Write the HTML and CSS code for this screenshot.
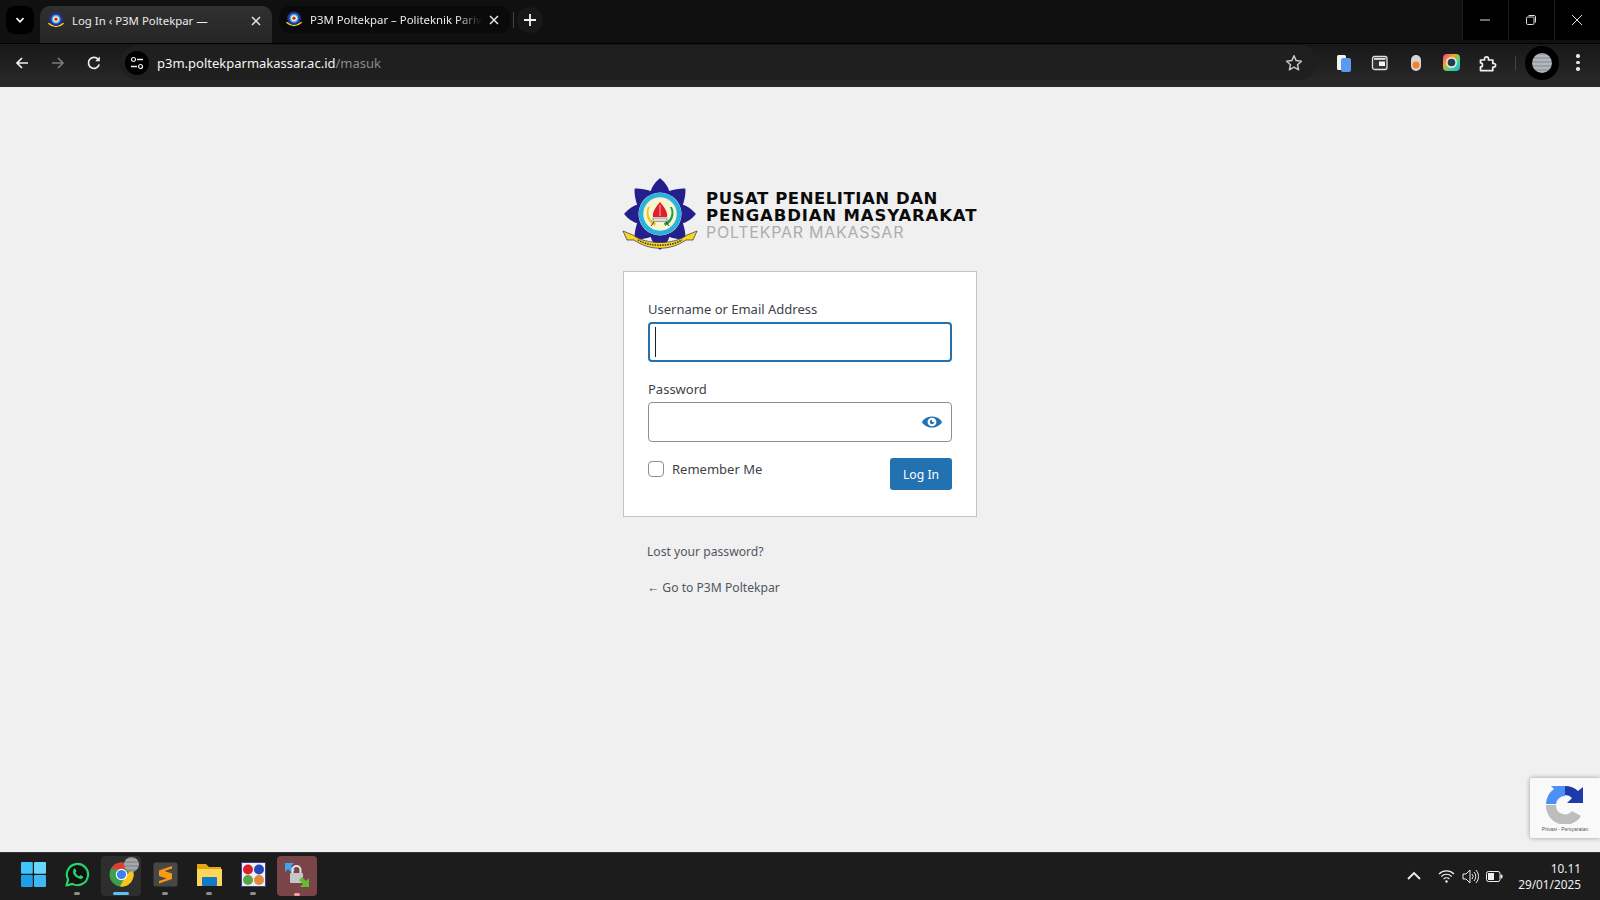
FILE: index.html
```html
<!DOCTYPE html>
<html lang="en">
<head>
<meta charset="utf-8">
<title>Log In ‹ P3M Poltekpar</title>
<link rel="stylesheet" href="styles.css">
</head>
<body>
<svg class="defs" width="0" height="0" aria-hidden="true">
  <defs>
    <symbol id="fav" viewBox="0 0 20 20">
      <path d="M1 13q9 8 18 0l-1-1q-8 6-16 0z" fill="#f5d020"/>
      <circle cx="10" cy="8" r="7.5" fill="#2a2f9e"/>
      <circle cx="10" cy="8" r="5" fill="#35b5e5"/>
      <circle cx="10" cy="8" r="3.4" fill="#f7f2c5"/>
      <circle cx="10" cy="8" r="1.8" fill="#e01f2d"/>
    </symbol>
  </defs>
</svg>
<div class="screen">
  <header class="tabstrip">
    <div class="tab-search"><svg width="12" height="12" viewBox="0 0 12 12"><path d="M2.5 4.2 6 7.8l3.5-3.6" fill="none" stroke="#fff" stroke-width="1.7"/></svg></div>
    <div class="tab tab-active">
      <svg class="fav" width="18" height="18"><use href="#fav"/></svg>
      <span class="tab-title">Log In ‹ P3M Poltekpar —</span>
      <svg class="tab-x" width="12" height="12" viewBox="0 0 12 12"><path d="M2 2l8 8M10 2l-8 8" stroke="#e8e8e8" stroke-width="1.5"/></svg>
    </div>
    <div class="tab tab-idle">
      <svg class="fav" width="18" height="18"><use href="#fav"/></svg>
      <span class="tab-title tab-fade">P3M Poltekpar – Politeknik Pariwisata</span>
      <svg class="tab-x" width="12" height="12" viewBox="0 0 12 12"><path d="M2 2l8 8M10 2l-8 8" stroke="#e8e8e8" stroke-width="1.5"/></svg>
    </div>
    <div class="tab-sep"></div>
    <div class="tab-new"><svg width="14" height="14" viewBox="0 0 14 14"><path d="M7 1v12M1 7h12" stroke="#f2f2f2" stroke-width="1.8"/></svg></div>
    <div class="win-controls">
      <div class="win-btn"><svg width="12" height="12" viewBox="0 0 12 12"><path d="M1 6h10" stroke="#ddd"/></svg></div>
      <div class="win-btn"><svg width="12" height="12" viewBox="0 0 12 12"><rect x="1.5" y="3" width="7.5" height="7.5" rx="1.2" fill="none" stroke="#ddd"/><path d="M3.5 1.5h5.5a1.5 1.5 0 0 1 1.5 1.5v5.5" fill="none" stroke="#ddd"/></svg></div>
      <div class="win-btn"><svg width="12" height="12" viewBox="0 0 12 12"><path d="M1 1l10 10M11 1 1 11" stroke="#ddd"/></svg></div>
    </div>
  </header>

  <nav class="toolbar">
    <div class="nav-btn"><svg width="16" height="16" viewBox="0 0 16 16"><path d="M14 8H3M8 3 3 8l5 5" fill="none" stroke="#f0f0f0" stroke-width="1.7"/></svg></div>
    <div class="nav-btn"><svg width="16" height="16" viewBox="0 0 16 16"><path d="M2 8h11M8 3l5 5-5 5" fill="none" stroke="#7b7b7b" stroke-width="1.7"/></svg></div>
    <div class="nav-btn"><svg width="16" height="16" viewBox="0 0 16 16"><path d="M13.2 9.6A5.5 5.5 0 1 1 12 4.2" fill="none" stroke="#f0f0f0" stroke-width="1.7"/><path d="M13.8 1.6v4.6H9.2z" fill="#f0f0f0"/></svg></div>
    <div class="omnibox">
      <div class="site-info"><svg width="14" height="14" viewBox="0 0 14 14"><circle cx="3.5" cy="3.5" r="2" fill="none" stroke="#eee" stroke-width="1.2"/><path d="M7 3.5h6M1 10.500h6" stroke="#eee" stroke-width="1.3"/><circle cx="10.500" cy="10.500" r="2" fill="none" stroke="#eee" stroke-width="1.2"/></svg></div>
      <div class="url"><span class="url-host">p3m.poltekparmakassar.ac.id</span><span class="url-path">/masuk</span></div>
      <svg class="star" width="18" height="18" viewBox="0 0 18 18"><path d="M9 1.800l2.200 4.800 5.200.6-3.900 3.500 1.100 5.100L9 13.200l-4.600 2.600 1.100-5.100L1.600 7.200l5.200-.6z" fill="none" stroke="#c8c8c8" stroke-width="1.500" stroke-linejoin="round"/></svg>
    </div>
    <div class="ext-row">
      <div class="ext"><svg width="16" height="18" viewBox="0 0 16 18"><rect x="1" y="1" width="9" height="15" rx="1.500" fill="#f2f2f2"/><rect x="5" y="4" width="10" height="14" rx="2" fill="#5a9bf0"/></svg></div>
      <div class="ext"><svg width="18" height="16" viewBox="0 0 18 16"><rect x="1.500" y="1.500" width="14.500" height="13" rx="2" fill="#333" stroke="#e4e4e4" stroke-width="1.300"/><rect x="3" y="3" width="11.500" height="1.800" fill="#e4e4e4"/><rect x="8" y="6.500" width="6" height="4.500" fill="#f4f4f4"/></svg></div>
      <div class="ext"><svg width="12" height="18" viewBox="0 0 12 18"><rect x="1" y="1" width="10" height="16" rx="5" fill="#d5d5d5"/><circle cx="6" cy="11" r="3.500" fill="#f5822a"/></svg></div>
      <div class="ext"><svg width="18" height="18" viewBox="0 0 18 18"><defs><linearGradient id="rb" x1="0" y1="0" x2="1" y2="1"><stop offset="0" stop-color="#f0359f"/><stop offset=".35" stop-color="#f5a623"/><stop offset=".65" stop-color="#3ddc84"/><stop offset="1" stop-color="#2f9bf0"/></linearGradient></defs><rect width="17" height="17" rx="4" fill="url(#rb)"/><circle cx="8.500" cy="8.500" r="5.500" fill="#dfe6ee"/><circle cx="8.500" cy="8.500" r="3.800" fill="#2a3a4d"/></svg></div>
      <div class="ext"><svg width="18" height="18" viewBox="0 0 18 18"><path d="M1.500 6H5.500V4.800a2 2 0 0 1 4 0V6h4.300v3.500h1a1.800 1.800 0 0 1 0 3.600h-1v3.500H1.500v-3.700a2 2 0 0 0 0-4z" fill="none" stroke="#f0f0f0" stroke-width="1.700" stroke-linejoin="round"/></svg></div>
      <div class="ext-sep"></div>
      <div class="avatar"><div class="avatar-img"></div></div>
      <div class="ext dots"><span></span><span></span><span></span></div>
    </div>
  </nav>

  <main class="page">
    <div class="login">
      <div class="logo">
        <svg class="emblem" width="76" height="76" viewBox="-38 -36 76 76">
          <path d="M0-35Q7-29 8.800-22 18-25 24.700-24.700 25-18 22-8.800 29-7 35 0 29 7 22 8.800 25 18 24.700 24.700 18 25 8.800 22 7 29 0 35-7 29-8.800 22-18 25-24.700 24.700-25 18-22 8.800-29 7-35 0-29-7-22-8.800-25-18-24.700-24.700-18-25-8.800-22-7-29 0-35z" fill="#241f8c" stroke="#241f8c" stroke-width="1.500" stroke-linejoin="round"/>
          <circle r="23" fill="#241f8c"/>
          <circle r="21.500" fill="#f2f2c8"/>
          <circle r="19" fill="none" stroke="#2cb2df" stroke-width="4.500"/>
          <circle r="15.500" fill="#f8f6cf"/>
          <path d="M-12-7A14 14 0 0 0-5 12l1-3A11 11 0 0 1-10-7z" fill="#e9c81f"/>
          <path d="M12-7A14 14 0 0 1 5 12l-1-3A11 11 0 0 0 10-7z" fill="#1f9a4a"/>
          <path d="M0-12C-5-6-8-1-7 3H7C8-1 5-6 0-12z" fill="#e01f2d"/>
          <path d="M0-9V2" stroke="#f8f6cf" stroke-width=".7"/>
          <rect x="-7" y="4" width="14" height="3.500" fill="#ddd" stroke="#555" stroke-width=".5"/>
          <path d="M-6 8-9 12M6 8 9 12" stroke="#333" stroke-width="1"/>
          <path d="M-37 17-27 21C-14 31 14 31 27 21L37 17 33 26 26 26C10 37-10 37-26 26L-33 26z" fill="#f6d91f" stroke="#2b2560" stroke-width=".7"/>
          <path d="M-22 26C-10 33 10 33 22 26" fill="none" stroke="#333" stroke-width="1.500" stroke-dasharray="1.500 1"/>
        </svg>
        <div class="logo-text">
          <div class="logo-line logo-line-1">PUSAT PENELITIAN DAN</div>
          <div class="logo-line">PENGABDIAN MASYARAKAT</div>
          <div class="logo-sub">POLTEKPAR MAKASSAR</div>
        </div>
      </div>

      <form class="card">
        <label class="field-label">Username or Email Address</label>
        <div class="input input-focus"><span class="caret"></span></div>
        <label class="field-label field-label-2">Password</label>
        <div class="input input-pass">
          <svg class="eye" width="20" height="20" viewBox="0 0 20 20"><path fill="#2271b1" d="M10 4.400C3.439 4.400 0 9.232 0 10c0 .766 3.439 5.600 10 5.600 6.560 0 10-4.834 10-5.600 0-.768-3.440-5.600-10-5.600zm0 9.907c-2.455 0-4.445-1.928-4.445-4.307S7.545 5.692 10 5.692s4.444 1.930 4.444 4.308-1.989 4.307-4.444 4.307zM10 10c-.407-.447.663-2.154 0-2.154-1.228 0-2.223.965-2.223 2.154s.995 2.154 2.223 2.154c1.227 0 2.223-.965 2.223-2.154 0-.547-1.877.379-2.223 0z"/></svg>
        </div>
        <div class="form-foot">
          <div class="remember"><span class="checkbox"></span><span>Remember Me</span></div>
          <div class="submit">Log In</div>
        </div>
      </form>

      <p class="below below-first">Lost your password?</p>
      <p class="below below-second">← Go to P3M Poltekpar</p>
    </div>

    <div class="recaptcha">
      <svg width="40" height="40" viewBox="0 0 40 40">
        <path d="M1 20A19 19 0 0 1 9 5L6 2H20V12A9 9 0 0 0 11 20Z" fill="#4a90f5"/>
        <path d="M20 2A19 19 0 0 1 33 7L38 3V19H22L27 14A9 9 0 0 0 20 11Z" fill="#1c3aa9"/>
        <path d="M1 21H11A9 9 0 0 0 27 27L36 32A19 19 0 0 1 1 21Z" fill="#bdbdbd"/>
      </svg>
      <div class="recaptcha-text">Privasi - Persyaratan</div>
    </div>
  </main>

  <footer class="taskbar">
    <div class="task">
      <svg class="task-icon" width="25" height="25" viewBox="0 0 25 25"><rect x="0" y="0" width="11.800" height="11.800" rx="1" fill="#41c4fb"/><rect x="13" y="0" width="12" height="11.800" rx="1" fill="#69d6fd"/><rect x="0" y="13" width="11.800" height="12" rx="1" fill="#1a9fe8"/><rect x="13" y="13" width="12" height="12" rx="1" fill="#3eb8f5"/></svg>
    </div>
    <div class="task">
      <svg class="task-icon" width="25" height="25" viewBox="0 0 25 25"><path d="M1.500 23.500 3.100 17.600A10.600 10.600 0 1 1 7.400 21.900z" fill="#111" stroke="#25d366" stroke-width="2.200" stroke-linejoin="round"/><path d="M8.500 7.300c1-1 1.700-.8 2.100 0l.8 1.800c.1.500-.7 1.200-.9 1.600.7 1.500 2 2.800 3.700 3.600.5-.3 1.100-1.200 1.600-1l1.900.9c.7.400.7 1.100 0 2-1.600 1.500-4 .7-6.500-1.100-2.700-2.100-4.100-5.100-2.700-6.800z" fill="#25d366"/></svg>
      <span class="pill"></span>
    </div>
    <div class="task task-open">
      <svg class="task-icon" width="25" height="25" viewBox="0 0 25 25"><circle cx="12.500" cy="12.500" r="12" fill="#3aa14a"/><path d="M2 7A12 12 0 0 1 23.500 7.500H12.500z" fill="#df3e30"/><path d="M23.500 7.500A12 12 0 0 1 11 24.500L17 13z" fill="#f8c51c"/><circle cx="12.500" cy="12.500" r="5.800" fill="#fff"/><circle cx="12.500" cy="12.500" r="4.600" fill="#3f7ff0"/></svg>
      <span class="pill pill-blue"></span>
      <span class="task-badge"></span>
    </div>
    <div class="task">
      <svg class="task-icon" width="25" height="25" viewBox="0 0 25 25"><rect width="24" height="24" rx="2" x=".5" y=".5" fill="#474747"/><path d="M19 4 6 8.500V14l7.500 2.500L6 19v2.500L19 17v-5.500L11.500 9 19 6.500z" fill="#f89a14"/></svg>
      <span class="pill"></span>
    </div>
    <div class="task">
      <svg class="task-icon" width="25" height="25" viewBox="0 0 25 25"><path d="M0 2h9l3 3h12v18H0z" fill="#e3a70f"/><path d="M0 7h25v17H0z" fill="#fbd65a"/><rect x="5" y="15" width="15" height="9" rx="1" fill="#1479c7"/></svg>
      <span class="pill"></span>
    </div>
    <div class="task">
      <svg class="task-icon" width="25" height="25" viewBox="0 0 25 25"><rect x=".5" y=".5" width="24" height="24" fill="#eef0f6" stroke="#3b3f8f"/><circle cx="7" cy="7.500" r="5" fill="#d9202a"/><circle cx="18" cy="7.500" r="5" fill="#2548b8"/><circle cx="7" cy="18" r="5" fill="#5aa445"/><circle cx="18" cy="18" r="5" fill="#e08a3a"/></svg>
      <span class="pill"></span>
    </div>
    <div class="task task-alert">
      <svg class="task-icon" width="26" height="26" viewBox="0 0 26 26"><path d="M1 1h9L7 4l4 4-3 3-4-4-3 3z" fill="#3fa3ee"/><rect x="6" y="11" width="13" height="10" rx="1" fill="#c6c6c6"/><path d="M8.500 11V8a4 4 0 0 1 8 0v3" fill="none" stroke="#e5e5e5" stroke-width="2"/><path d="M25 25h-9l3-3-4-4 3-3 4 4 3-3z" fill="#62bd35"/></svg>
      <span class="pill pill-pink"></span>
    </div>
    <div class="tray">
      <svg width="16" height="10" viewBox="0 0 16 10"><path d="M2 8l6-6 6 6" fill="none" stroke="#f0f0f0" stroke-width="1.800"/></svg>
      <svg class="tray-wifi" width="17" height="14" viewBox="0 0 17 14"><path d="M1 5a10.500 10.500 0 0 1 15 0M3.300 7.500a7.300 7.300 0 0 1 10.400 0M5.600 10a4 4 0 0 1 5.800 0" fill="none" stroke="#eee" stroke-width="1.100"/><circle cx="8.500" cy="12.500" r="1.200" fill="#eee"/></svg>
      <svg class="tray-vol" width="17" height="15" viewBox="0 0 17 15"><path d="M1 5h3l4-4v13l-4-4H1z" fill="none" stroke="#eee"/><path d="M10 5a3.500 3.500 0 0 1 0 5M12 3a6.500 6.500 0 0 1 0 9M14 1a9.500 9.500 0 0 1 0 13" fill="none" stroke="#eee"/></svg>
      <svg class="tray-bat" width="17" height="11" viewBox="0 0 17 11"><rect x=".5" y=".5" width="13.500" height="10" rx="2" fill="none" stroke="#eee"/><rect x="2" y="2" width="6" height="7" fill="#eee"/><rect x="14.500" y="3.500" width="2" height="4" rx="1" fill="#eee"/></svg>
      <div class="clock"><div>10.11</div><div>29/01/2025</div></div>
    </div>
  </footer>
</div>
</body>
</html>
```
FILE: styles.css
```css
* { box-sizing: border-box; }
html, body { margin: 0; height: 100%; overflow: hidden; }
body { font-family: "Noto Sans", "Open Sans", sans-serif; background: #f0f0f1; }
.defs { display: block; height: 0; }
.screen { width: 1600px; height: 900px; display: flex; flex-direction: column; }

/* tab strip */
.tabstrip { height: 44px; flex: none; display: flex; align-items: flex-end; background: #101010; border-bottom: 1px solid #000; position: relative; padding-left: 6px; }
.tab-search { width: 28px; height: 28px; margin-bottom: 9px; border-radius: 9px; background: #000; display: flex; align-items: center; justify-content: center; }
.tab { display: flex; align-items: center; color: #ececec; font-size: 11.4px; }
.tab-active { width: 232px; height: 37px; margin-left: 6px; padding: 0 10px 8px 7px; border-radius: 10px 10px 0 0; background: linear-gradient(#303030, #262626); }
.tab-idle { width: 231px; height: 27px; margin: 0 0 10px 7px; padding: 0 10px 0 6px; border-radius: 10px; background: #0a0a0a; }
.fav { flex: none; }
.tab-title { flex: 1; margin-left: 7px; white-space: nowrap; overflow: hidden; }
.tab-fade { -webkit-mask-image: linear-gradient(90deg, #000 85%, transparent); mask-image: linear-gradient(90deg, #000 85%, transparent); }
.tab-x { flex: none; margin-left: 6px; }
.tab-sep { width: 1px; height: 16px; background: #444; margin: 0 0 15px 3px; }
.tab-new { width: 26px; height: 26px; margin: 0 0 10px 3px; border-radius: 50%; background: #181818; display: flex; align-items: center; justify-content: center; }
.win-controls { margin-left: auto; align-self: flex-start; display: flex; height: 40px; }
.win-btn { width: 46px; height: 40px; padding-right: 2px; background: #000; border-left: 1px solid #1c1c1c; display: flex; align-items: center; justify-content: center; }

/* toolbar */
.toolbar { height: 43px; flex: none; display: flex; align-items: center; padding: 0 0 6px 4px; background: linear-gradient(#181818, #2a2a2a); }
.nav-btn { width: 36px; height: 36px; display: flex; align-items: center; justify-content: center; }
.omnibox { width: 1197px; height: 35px; margin-left: 8px; display: flex; align-items: center; padding: 0 14px 0 5px; background: #1f1f1f; border-radius: 18px; }
.site-info { width: 24px; height: 24px; border-radius: 50%; background: #000; display: flex; align-items: center; justify-content: center; flex: none; }
.url { margin-left: 8px; flex: 1; font-size: 13px; white-space: nowrap; }
.url-host { color: #f4f4f4; }
.url-path { color: #8b8b8b; }
.ext-row { display: flex; align-items: center; flex: 1; padding-left: 9px; }
.ext { width: 36px; height: 32px; display: flex; align-items: center; justify-content: center; flex: none; }
.ext-sep { width: 1px; height: 14px; background: #444; margin-left: 9px; }
.avatar { width: 34px; height: 34px; margin-left: 9px; border-radius: 50%; background: #000; display: flex; align-items: center; justify-content: center; }
.avatar-img { width: 20px; height: 20px; border-radius: 50%; background: repeating-linear-gradient(#9aa0a8 0 2px, #b3b6bb 2px 4px); }
.dots { flex-direction: column; gap: 3px; margin-left: 1px; }
.dots span { width: 3.5px; height: 3.5px; border-radius: 50%; background: #e8e8e8; }

/* page */
.page { flex: 1; position: relative; background: #f0f0f1; min-height: 0; padding-top: 90px; }
.login { width: 354px; margin: 0 auto; }
.logo { height: 94px; display: flex; align-items: flex-start; }
.emblem { flex: none; margin-left: -1px; margin-top: 1px; }
.logo-text { margin-left: 8px; padding-top: 14px; white-space: nowrap; }
.logo-line { font-family: "DejaVu Sans", sans-serif; font-weight: 700; font-size: 16.5px; line-height: 16.5px; letter-spacing: .85px; color: #0b0b0b; }
.logo-line-1 { letter-spacing: .55px; }
.logo-sub { font-family: Inter, sans-serif; font-size: 16px; line-height: 17px; color: #adadad; letter-spacing: .75px; }

.card { height: 246px; padding: 27px 24px 0; background: #fff; border: 1px solid #c3c4c7; display: flex; flex-direction: column; }
.field-label { font-size: 13px; line-height: 20px; color: #3c434a; height: 23px; }
.field-label-2 { margin-top: 17px; height: 23px; }
.input { height: 40px; background: #fff; border: 1px solid #8c8f94; border-radius: 4px; width: 304px; display: flex; align-items: center; flex: none; }
.input-focus { border: 2px solid #2271b1; margin-left: 0; padding-left: 5px; }
.caret { width: 1px; height: 30px; background: #1e1e1e; }
.input-pass { justify-content: flex-end; padding-right: 9px; }
.form-foot { display: flex; justify-content: space-between; align-items: flex-start; margin-top: 16px; }
.remember { display: flex; align-items: center; gap: 8px; font-size: 13px; color: #3c434a; height: 22px; }
.checkbox { width: 16px; height: 16px; border: 1px solid #8c8f94; border-radius: 4px; background: #fff; }
.submit { width: 62px; height: 32px; background: #2271b1; color: #fff; font-size: 12.2px; border-radius: 3px; display: flex; align-items: center; justify-content: center; }
.below { margin: 0; padding-left: 24px; font-size: 12.15px; line-height: 18px; color: #50575e; }
.below-first { margin-top: 26px; }
.below-second { margin-top: 18px; }

.recaptcha { position: absolute; right: 0; bottom: 14px; width: 70px; height: 60px; background: #f9f9f9; border-radius: 3px 0 0 3px; box-shadow: 0 0 5px rgba(0,0,0,.35); display: flex; flex-direction: column; align-items: center; padding-top: 6px; }
.recaptcha-text { font-family: "Liberation Sans", sans-serif; font-size: 5px; line-height: 8px; color: #555; white-space: nowrap; margin-top: 1px; }

/* taskbar */
.taskbar { height: 48px; flex: none; display: flex; align-items: center; padding: 0 0 1px 11px; background: #1c1c1c; border-top: 1px solid #333; }
.task { width: 44px; height: 40px; position: relative; display: flex; flex-direction: column; align-items: center; padding-top: 6px; gap: 5px; border-radius: 4px; flex: none; }
.task-open { background: #2e2e2e; width: 40px; margin: 0 2px; }
.task-alert { background: #7a4549; width: 40px; margin-left: 2px; }
.pill { width: 6px; height: 3px; border-radius: 2px; background: #8d8d8d; }
.pill-blue { width: 16px; background: #5fc2f5; }
.pill-pink { background: #f19ea8; }
.task-badge { position: absolute; top: 1px; right: 2px; width: 15px; height: 15px; border-radius: 50%; background: repeating-linear-gradient(#8f9398 0 2px, #a4a7ab 2px 4px); }
.tray { margin-left: auto; display: flex; align-items: center; height: 100%; padding-right: 19px; }
.tray-wifi { margin-left: 16px; }
.tray-vol { margin-left: 7px; }
.tray-bat { margin-left: 7px; }
.clock { margin-left: 15px; text-align: right; color: #efefef; font-size: 11.8px; line-height: 16px; }
```
